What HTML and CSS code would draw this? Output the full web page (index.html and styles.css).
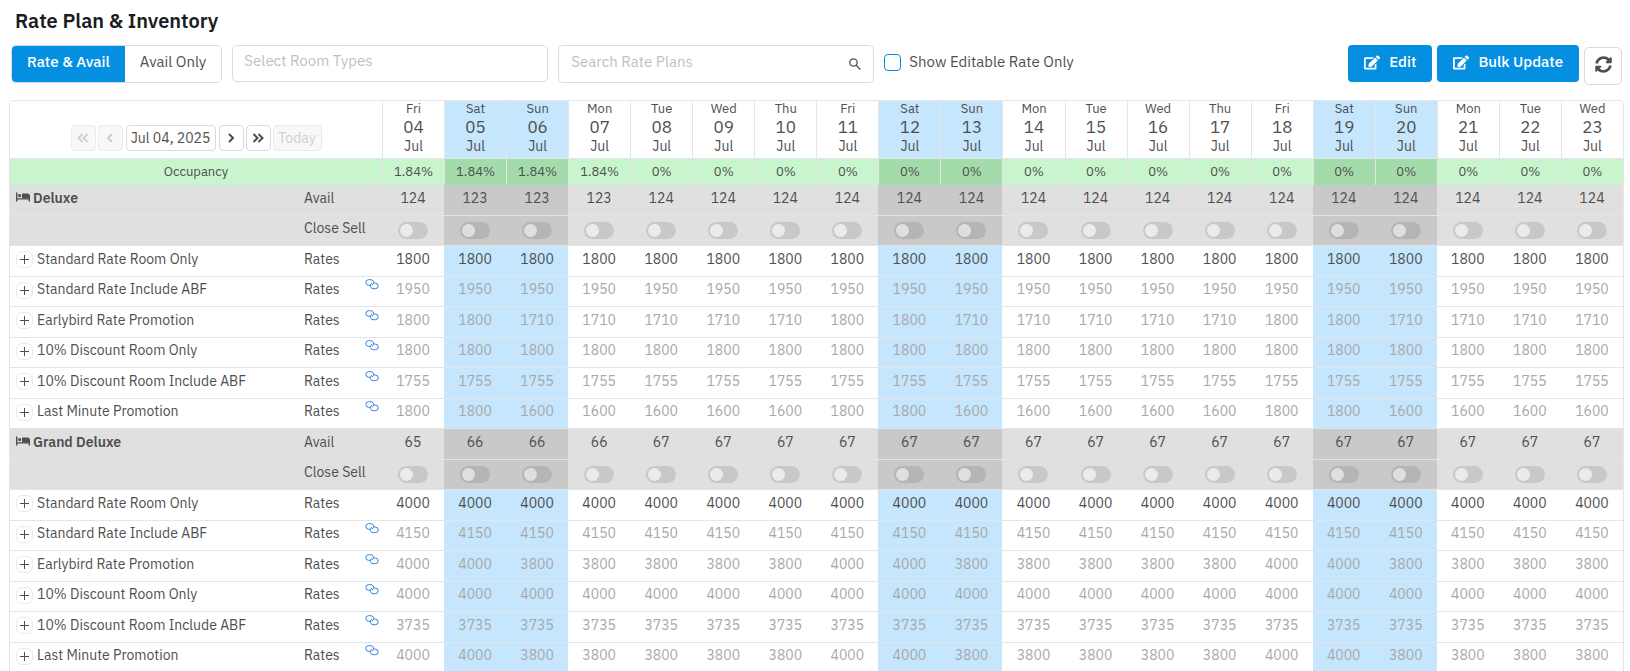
FILE: index.html
```html
<!DOCTYPE html>
<html lang="en">
  <head>
    <meta charset="UTF-8" />
    <meta name="viewport" content="width=device-width, initial-scale=1.0" />
    <title>Rate Plan &amp; Inventory</title>
    <link rel="stylesheet" href="styles.css">
  </head>
  <body>
    <!-- shared icons -->
    <svg class="icon-defs" aria-hidden="true">
      <symbol id="icon-edit" viewBox="0 0 576 512">
        <path d="M402.6 83.2l90.2 90.2c3.8 3.8 3.8 10 0 13.8L274.4 405.6l-92.8 10.3c-12.4 1.4-22.9-9.1-21.5-21.5l10.3-92.8L388.8 83.2c3.8-3.8 10-3.8 13.8 0zm162-22.9l-48.8-48.8c-15.2-15.2-39.9-15.2-55.2 0l-35.4 35.4c-3.8 3.8-3.8 10 0 13.8l90.2 90.2c3.8 3.8 10 3.8 13.8 0l35.4-35.4c15.2-15.3 15.2-40 0-55.2zM384 346.2V448H64V128h229.8c3.2 0 6.2-1.3 8.5-3.5l40-40c7.6-7.6 2.2-20.5-8.5-20.5H48C21.5 64 0 85.5 0 112v352c0 26.5 21.5 48 48 48h352c26.5 0 48-21.5 48-48V306.2c0-10.7-12.9-16-20.5-8.5l-40 40c-2.2 2.3-3.5 5.3-3.5 8.5z" />
      </symbol>
      <symbol id="icon-sync" viewBox="0 0 512 512">
        <path d="M370.72 133.28C339.458 104.008 298.888 87.962 255.848 88c-77.458.068-144.328 53.178-162.791 126.85-1.344 5.363-6.122 9.15-11.651 9.15H24.103c-7.498 0-13.194-6.807-11.807-14.176C33.933 94.924 134.813 8 256 8c66.448 0 126.791 26.136 171.315 68.685L463.03 40.97C478.149 25.851 504 36.559 504 57.941V192c0 13.255-10.745 24-24 24H345.941c-21.382 0-32.09-25.851-16.971-40.971l41.75-41.749zM32 296h134.059c21.382 0 32.09 25.851 16.971 40.971l-41.75 41.75c31.262 29.273 71.835 45.319 114.876 45.28 77.418-.07 144.315-53.144 162.787-126.849 1.344-5.363 6.122-9.15 11.651-9.15h57.304c7.498 0 13.194 6.807 11.807 14.176C478.067 417.076 377.187 504 256 504c-66.448 0-126.791-26.136-171.315-68.685L48.97 471.03C33.851 486.149 8 475.441 8 454.059V320c0-13.255 10.745-24 24-24z" />
      </symbol>
      <symbol id="icon-bed" viewBox="0 0 14 10">
        <path d="M0 0.6h1.4v5.6h11.2V3.6a2 2 0 0 1 1.4 1.6V9.4h-1.4V7.6H1.4v1.8H0z" />
        <circle cx="3.6" cy="3.6" r="1.6" />
        <path d="M6 1.6h5.4A2.6 2.6 0 0 1 14 4.2V6.4H6z" />
      </symbol>
      <symbol id="icon-link" viewBox="0 0 14 11">
        <path d="M5 6.3H3.6a2.8 2.8 0 0 1 0-5.6h2.2a2.8 2.8 0 0 1 2.7 3.6q-.3 1.3-1.5 1.8M9 4.1h1.4a2.8 2.8 0 0 1 0 5.6H8.2a2.8 2.8 0 0 1-2.7-3.6q.3-1.3 1.5-1.8" />
      </symbol>
      <symbol id="icon-plus" viewBox="0 0 11 11">
        <path d="M5.5 1v9M1 5.5h9" />
      </symbol>
    </svg>

    <header class="page-header">
      <h1>Rate Plan &amp; Inventory</h1>
    </header>

    <div class="toolbar">
      <div class="view-switch">
        <button type="button" class="view-button active">Rate &amp; Avail</button>
        <button type="button" class="view-button">Avail Only</button>
      </div>
      <select class="room-select" id="room_types" aria-label="Select Room Types">
        <option value="">Select Room Types</option>
        <option value="deluxe">Deluxe</option>
        <option value="grand_deluxe">Grand Deluxe</option>
      </select>
      <div class="search-box">
        <input type="text" id="search_plans" placeholder="Search Rate Plans" aria-label="Search Rate Plans" />
        <svg class="search-icon" viewBox="0 0 12 12">
          <circle cx="4.5" cy="4.5" r="3.7" />
          <path d="M7.2 7.2l4.2 4.3" />
        </svg>
      </div>
      <label class="editable-only" for="editable_only">
        <input type="checkbox" id="editable_only" />
        Show Editable Rate Only
      </label>
      <div class="actions">
        <button type="button" class="primary-button">
          <svg><use href="#icon-edit" /></svg>
          Edit
        </button>
        <button type="button" class="primary-button">
          <svg><use href="#icon-edit" /></svg>
          Bulk Update
        </button>
        <button type="button" class="refresh-button" aria-label="Refresh">
          <svg><use href="#icon-sync" /></svg>
        </button>
      </div>
    </div>

    <div class="table-container">
      <table class="rate-table">
        <colgroup>
          <col class="col-name">
          <col class="col-type">
          <col class="col-day" span="20">
        </colgroup>
        <thead>
          <tr id="date_row">
            <td colspan="2" class="date-cell">
              <div class="date-nav">
                <button type="button" disabled aria-label="Back two weeks">
                  <svg viewBox="0 0 12 10"><path d="M5.5 1L1.5 5l4 4M10.5 1l-4 4 4 4" /></svg>
                </button>
                <button type="button" disabled aria-label="Back one day">
                  <svg viewBox="0 0 12 10"><path d="M8 1L4 5l4 4" /></svg>
                </button>
                <input type="text" id="start_date" value="Jul 04, 2025" aria-label="Start date" />
                <button type="button" aria-label="Forward one day">
                  <svg viewBox="0 0 12 10"><path d="M4 1l4 4-4 4" /></svg>
                </button>
                <button type="button" aria-label="Forward two weeks">
                  <svg viewBox="0 0 12 10"><path d="M1.5 1l4 4-4 4M6.5 1l4 4-4 4" /></svg>
                </button>
                <button type="button" class="today-button" disabled>Today</button>
              </div>
            </td>
          </tr>
          <tr id="occupancy_row" class="occupancy">
            <th colspan="2" scope="row">Occupancy</th>
          </tr>
        </thead>
        <tbody id="rates"></tbody>
      </table>
    </div>
    <script src="script.js"></script>
  </body>
</html>
```

FILE: styles.css
```css
* {
  box-sizing: border-box;
}
body {
  font-family: "IBM Plex Sans", Roboto, sans-serif;
  font-size: 15px;
  line-height: 20px;
  margin: 0;
  color: #4f4f4f;
  background-color: #fff;
  overflow: hidden;
}
button,
input,
select {
  font: inherit;
  color: inherit;
  margin: 0;
}
button {
  cursor: pointer;
}
.icon-defs {
  display: none;
}
.page-header {
  padding: 7px 15px 0;
}
h1 {
  font-size: 20px;
  line-height: 28px;
  font-weight: 600;
  margin: 0;
  color: #1b1c1d;
}

/* Toolbar */
.toolbar {
  display: flex;
  align-items: flex-start;
  gap: 10px;
  padding: 10px 8px 0 11px;
}
.view-switch {
  display: flex;
  height: 38px;
  border: 1px solid #d9dadb;
  border-radius: 5px;
  overflow: hidden;
}
.view-button {
  padding: 0 15px 4px;
  border: none;
  background-color: #fff;
}
.view-button.active {
  background-color: #058fe1;
  color: #fff;
  font-weight: 500;
}
.room-select,
.search-box {
  flex: 0 1 316px;
}
.room-select {
  height: 37px;
  padding: 0 11px 5px;
  border: 1px solid #d9dadb;
  border-radius: 5px;
  background-color: #fff;
  color: #bfbfbf;
  appearance: none;
}
.search-box {
  display: flex;
  align-items: center;
  height: 38px;
  padding-right: 12px;
  border: 1px solid #d9dadb;
  border-radius: 5px;
}
.search-box input {
  flex: 1;
  min-width: 0;
  padding: 0 12px 4px;
  border: none;
  outline: none;
  background: none;
}
.search-box input::placeholder {
  color: #bfbfbf;
}
.search-icon {
  width: 12px;
  height: 12px;
  fill: none;
  stroke: #4f4f4f;
  stroke-width: 1.3;
}
.editable-only {
  display: flex;
  align-items: center;
  gap: 8px;
  height: 34px;
}
.editable-only input {
  width: 17px;
  height: 17px;
  border: 1px solid #058fe1;
  border-radius: 4px;
  background-color: #fff;
  appearance: none;
}
.actions {
  display: flex;
  gap: 5px;
  margin-left: auto;
}
.primary-button {
  display: flex;
  align-items: center;
  gap: 9px;
  height: 37px;
  padding: 0 16px 3px;
  border: none;
  border-radius: 4px;
  background-color: #058fe1;
  color: #fff;
  font-weight: 500;
}
.primary-button svg {
  width: 16px;
  height: 15px;
  fill: #fff;
}
.refresh-button {
  width: 38px;
  height: 38px;
  margin-top: 2px;
  padding: 0 0 3px;
  border: 1px solid #d9dadb;
  border-radius: 5px;
  background-color: #fff;
}
.refresh-button svg {
  display: block;
  width: 17px;
  height: 17px;
  margin: 0 auto;
  fill: #4f4f4f;
}

/* Rate table */
.table-container {
  margin: 15px 6px 0 9px;
  border: 1px solid #e5e5e5;
  border-radius: 5px 5px 0 0;
  overflow: hidden;
}
.rate-table {
  width: 100%;
  table-layout: fixed;
  border-collapse: separate;
  border-spacing: 0;
  font-size: 14px;
}
.col-name {
  width: 286px;
}
.col-type {
  width: 86px;
}
.rate-table td,
.rate-table th {
  padding: 0;
  text-align: center;
  font-weight: normal;
}
.rate-table thead tr > * + * {
  border-left: 1px solid #e5e5e5;
}
.rate-table .date-cell {
  height: 58px;
  padding-top: 16px;
  border-bottom: 1px solid #e5e5e5;
}
.rate-table .day {
  height: 58px;
  border-bottom: 1px solid #e5e5e5;
  line-height: 18px;
  vertical-align: top;
}
.day span {
  display: block;
}
.day .day-name {
  font-size: 13px;
  line-height: 16px;
}
.day .day-number {
  font-size: 17px;
  line-height: 20px;
}
.day.weekend,
.rate .weekend {
  background-color: #c5e6fd;
}
.occupancy {
  background-color: #c8f5cc;
  font-size: 13px;
}
.rate-table .occupancy > * {
  height: 26px;
  padding-bottom: 1px;
}
.occupancy .weekend {
  background-color: #a3dcaa;
}

/* Date navigation */
.date-nav {
  display: flex;
  justify-content: center;
  gap: 2px;
}
.date-nav button,
.date-nav input {
  height: 26px;
  padding: 0;
  border: 1px solid #d9dadb;
  border-radius: 4px;
  background-color: #fff;
  text-align: center;
}
.date-nav button {
  width: 25px;
}
.date-nav input {
  width: 90px;
  margin: 0 1px;
}
.date-nav button:disabled {
  border-color: #ebebeb;
  background-color: #f8f8f8;
  color: #cfcfcf;
  cursor: default;
}
.date-nav .today-button {
  width: 49px;
}
.date-nav svg {
  display: block;
  width: 12px;
  height: 10px;
  margin: 0 auto;
  fill: none;
  stroke: currentColor;
  stroke-width: 2;
}

/* Body rows */
#rates td,
#rates th {
  height: 30px;
  padding-bottom: 5px;
  border-bottom: 1px solid #e5e5e5;
}
#rates tr:nth-child(odd) > * {
  height: 31px;
}
#rates th,
#rates .type {
  text-align: left;
}
#rates th {
  padding-left: 6px;
}
#rates .type {
  padding-left: 8px;
}
.room {
  background-color: #e0e0e0;
}
.room .weekend {
  background-color: #c9c9c9;
}
#rates .room-name {
  font-weight: 600;
}
.name {
  display: flex;
  align-items: center;
  gap: 4px;
}
.room-name .name {
  gap: 3px;
}
.bed-icon {
  width: 14px;
  height: 10px;
  margin-bottom: 2px;
  fill: #4f4f4f;
}
.expand {
  display: flex;
  align-items: center;
  justify-content: center;
  width: 17px;
  height: 17px;
  margin-top: 2px;
  padding: 0;
  border: 1px solid #ebebeb;
  border-radius: 6px;
  background-color: #fff;
}
.expand svg {
  width: 11px;
  height: 11px;
  stroke: #4f4f4f;
}
.type-label {
  display: flex;
  justify-content: space-between;
  padding-right: 3px;
}
.link-icon {
  width: 14px;
  height: 11px;
  fill: none;
  stroke: #2f86d6;
}
.derived .value {
  color: #a8a8a8;
}
.toggle {
  display: block;
  width: 30px;
  height: 17px;
  margin: 4px auto 0;
  padding: 2px;
  border-radius: 9px;
  background-color: #c8c8c8;
  appearance: none;
}
.toggle::before {
  content: "";
  display: block;
  width: 13px;
  height: 13px;
  border-radius: 50%;
  background-color: #ebebeb;
}
.weekend .toggle {
  background-color: #b5b5b5;
}
.weekend .toggle::before {
  background-color: #dfdfdf;
}
```

FILE: script.js
```javascript
const dayNames = ["Sun", "Mon", "Tue", "Wed", "Thu", "Fri", "Sat"];
const firstDay = 4;
const dayCount = 20;

// July 2025, the 4th is a Friday
const days = [];
for (let i = 0; i < dayCount; i++) {
  const weekday = (5 + i) % 7;
  days.push({
    name: dayNames[weekday],
    number: String(firstDay + i).padStart(2, "0"),
    weekend: weekday === 6 || weekday === 0,
    peak: weekday === 5 || weekday === 6,
  });
}

// values for the first days, the last one is repeated to the end
const occupancy = ["1.84%", "1.84%", "1.84%", "1.84%", "0%"];

// [name, rate, rate outside Friday and Saturday]
const rooms = [
  {
    name: "Deluxe",
    avail: [124, 123, 123, 123, 124],
    plans: [
      ["Standard Rate Room Only", 1800, 1800],
      ["Standard Rate Include ABF", 1950, 1950],
      ["Earlybird Rate Promotion", 1800, 1710],
      ["10% Discount Room Only", 1800, 1800],
      ["10% Discount Room Include ABF", 1755, 1755],
      ["Last Minute Promotion", 1800, 1600],
    ],
  },
  {
    name: "Grand Deluxe",
    avail: [65, 66, 66, 66, 67],
    plans: [
      ["Standard Rate Room Only", 4000, 4000],
      ["Standard Rate Include ABF", 4150, 4150],
      ["Earlybird Rate Promotion", 4000, 3800],
      ["10% Discount Room Only", 4000, 4000],
      ["10% Discount Room Include ABF", 3735, 3735],
      ["Last Minute Promotion", 4000, 3800],
    ],
  },
];

function valueAt(list, i) {
  return list[Math.min(i, list.length - 1)];
}

function cells(render) {
  return days
    .map((day, i) => `<td class="value${day.weekend ? " weekend" : ""}">${render(day, i)}</td>`)
    .join("");
}

document.getElementById("date_row").insertAdjacentHTML(
  "beforeend",
  days
    .map(
      (day) => `<th scope="col" class="day${day.weekend ? " weekend" : ""}">
        <span class="day-name">${day.name}</span><span class="day-number">${day.number}</span><span>Jul</span>
      </th>`
    )
    .join("")
);

document
  .getElementById("occupancy_row")
  .insertAdjacentHTML("beforeend", cells((day, i) => valueAt(occupancy, i)));

let html = "";
rooms.forEach((room) => {
  html += `<tr class="room">
    <th scope="row" class="room-name"><div class="name"><svg class="bed-icon"><use href="#icon-bed" /></svg>${room.name}</div></th>
    <td class="type">Avail</td>
    ${cells((day, i) => valueAt(room.avail, i))}
  </tr>
  <tr class="room">
    <th></th>
    <td class="type">Close Sell</td>
    ${cells((day) => `<input type="checkbox" class="toggle" aria-label="Close sell ${room.name} ${day.number} Jul" />`)}
  </tr>`;

  room.plans.forEach(([name, peakRate, rate], index) => {
    // every plan after the first follows the standard rate
    const derived = index > 0;
    html += `<tr class="rate${derived ? " derived" : ""}">
      <th scope="row"><div class="name">
        <button type="button" class="expand" aria-label="Expand ${name}"><svg><use href="#icon-plus" /></svg></button>${name}
      </div></th>
      <td class="type"><div class="type-label">Rates${
        derived ? '<svg class="link-icon"><use href="#icon-link" /></svg>' : ""
      }</div></td>
      ${cells((day) => (day.peak ? peakRate : rate))}
    </tr>`;
  });
});
document.getElementById("rates").innerHTML = html;
```
